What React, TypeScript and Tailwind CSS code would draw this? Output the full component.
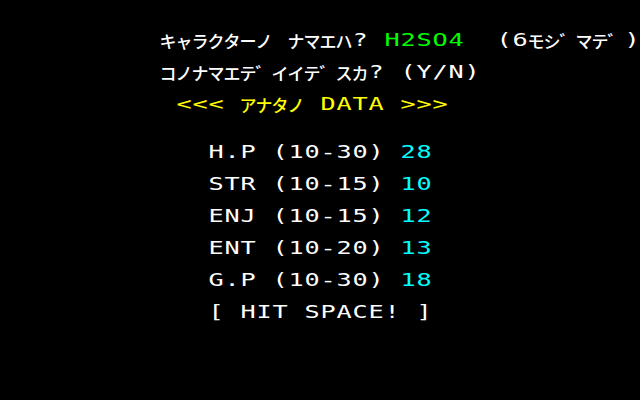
import React from 'react';

type Seg = [string, string];

interface Line {
  row: number;
  col: number;
  segs: Seg[];
}

const white = 'text-white';
const green = 'text-[#00ff00]';
const yellow = 'text-[#ffff00]';
const cyan = 'text-[#00ffff]';

const lines: Line[] = [
  { row: 2, col: 10, segs: [['キャラクターノ ナマエハ? ', white], ['H2SO4', green], ['  (6モシ゛マテ゛)', white]] },
  { row: 4, col: 10, segs: [['コノナマエテ゛イイテ゛スカ? (Y/N)', white]] },
  { row: 6, col: 11, segs: [['<<< アナタノ DATA >>>', yellow]] },
  { row: 9, col: 13, segs: [['H.P (10-30) ', white], ['28', cyan]] },
  { row: 11, col: 13, segs: [['STR (10-15) ', white], ['10', cyan]] },
  { row: 13, col: 13, segs: [['ENJ (10-15) ', white], ['12', cyan]] },
  { row: 15, col: 13, segs: [['ENT (10-20) ', white], ['13', cyan]] },
  { row: 17, col: 13, segs: [['G.P (10-30) ', white], ['18', cyan]] },
  { row: 19, col: 13, segs: [['[ HIT SPACE! ]', white]] },
];

const isKana = (ch: string) => ch.charCodeAt(0) >= 0x3000;

function Cell({ ch, color }: { ch: string; color: string }) {
  return (
    <span className={`w-4 h-4 shrink-0 flex items-center justify-center leading-none ${color} ${isKana(ch) ? "font-['Noto_Sans_CJK_JP',sans-serif] text-[17px] font-medium" : "font-['DejaVu_Sans_Mono',monospace] text-[18px] scale-x-[1.4]"}`}>
      {ch === ' ' ? '\u00a0' : ch}
    </span>
  );
}

function Row({ line }: { line?: Line }) {
  if (!line) return <div className="h-4" />;
  const cells: { ch: string; color: string }[] = [];
  line.segs.forEach(([text, color]) => {
    Array.from(text).forEach((ch) => cells.push({ ch, color }));
  });
  return (
    <div className="h-4 flex" style={{ paddingLeft: line.col * 16 }}>
      {cells.map((c, i) => (
        <Cell key={i} ch={c.ch} color={c.color} />
      ))}
    </div>
  );
}

export default function App() {
  return (
    <div className="w-[640px] h-[400px] bg-black overflow-hidden flex flex-col">
      {Array.from({ length: 25 }, (_, r) => (
        <Row key={r} line={lines.find((l) => l.row === r)} />
      ))}
    </div>
  );
}
